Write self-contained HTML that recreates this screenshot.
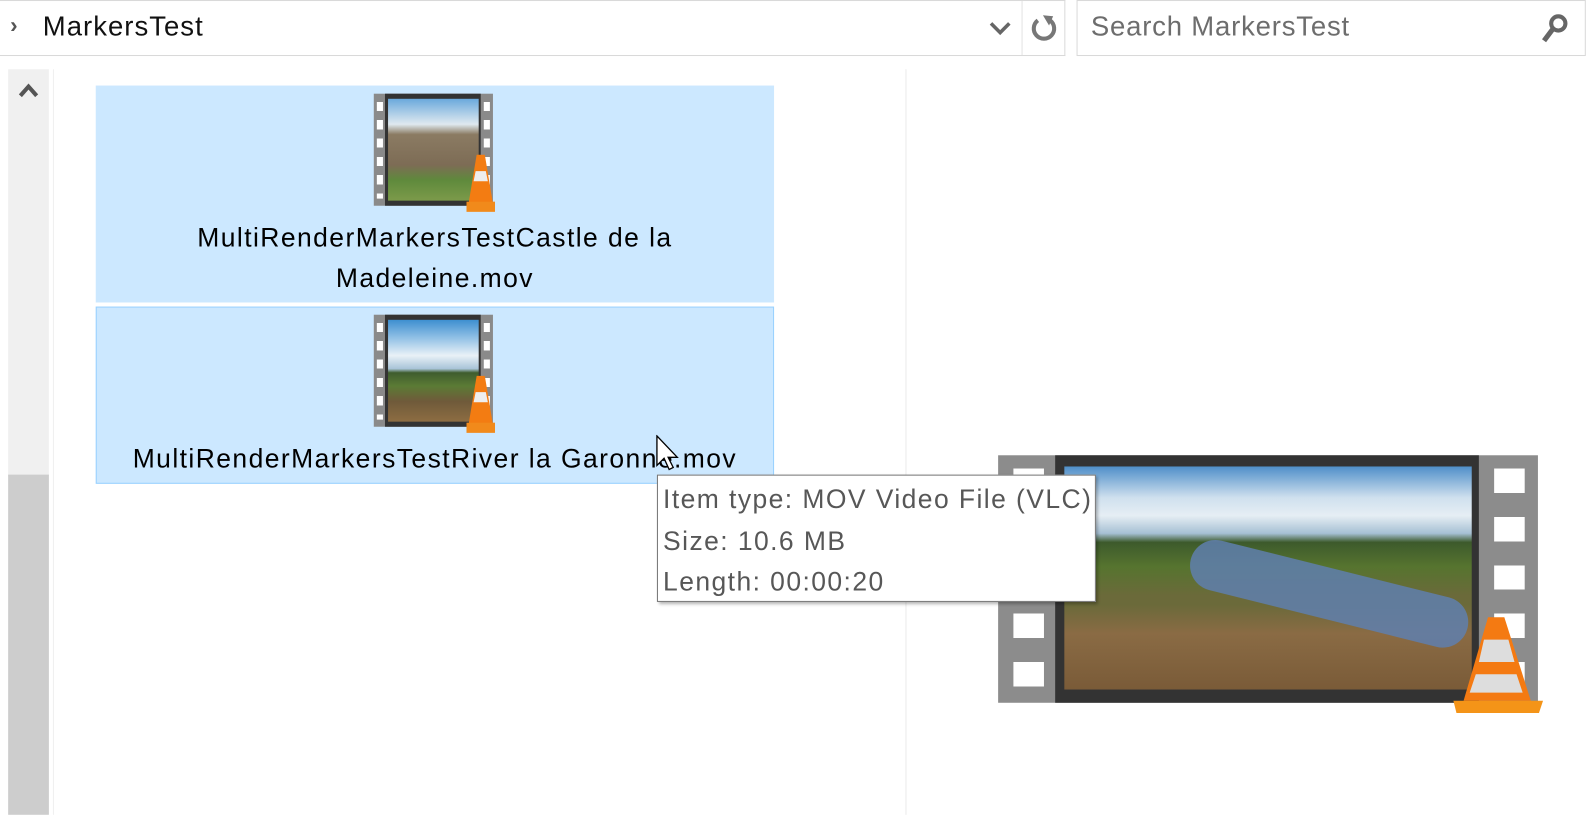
<!DOCTYPE html>
<html><head><meta charset="utf-8"><style>
body{margin:0;width:1594px;height:800px;background:#fff;position:relative;overflow:hidden;font-family:"Segoe UI","Liberation Sans",sans-serif}
#w{position:absolute;left:0;top:0;width:1566px;height:786px;transform:scale(1.0185);transform-origin:0 0}
.a{position:absolute}
.txt{font-size:26px;color:#000;text-align:center;letter-spacing:1.4px}
</style></head><body><div id="w">
<!-- top bar -->
<div class="a" style="left:0;top:0;width:1045px;height:53px;border-top:1px solid #d9d9d9;border-bottom:1px solid #d9d9d9;border-right:1px solid #d9d9d9"></div>
<div class="a" style="left:1003px;top:1px;width:1px;height:53px;background:#e3e3e3"></div>
<div class="a" style="left:10px;top:12px;font-size:22px;color:#555;font-weight:bold">›</div>
<div class="a" style="left:42px;top:11px;font-size:27px;color:#111;letter-spacing:1px">MarkersTest</div>
<svg class="a" style="left:970px;top:20px" width="24" height="16"><path d="M3 3 L12 12 L21 3" stroke="#666" stroke-width="3.5" fill="none"/></svg>
<svg class="a" style="left:1010px;top:12px" width="30" height="32"><path d="M9 8 A10 10 0 1 0 21 8" stroke="#777" stroke-width="4" fill="none"/><path d="M14 3 L24 4 L20 13 Z" fill="#777"/></svg>
<div class="a" style="left:1057px;top:0;width:498px;height:53px;border:1px solid #d9d9d9"></div>
<div class="a" style="left:1071px;top:11px;font-size:27px;color:#6d6d6d;letter-spacing:0.8px">Search MarkersTest</div>
<svg class="a" style="left:1510px;top:12px" width="34" height="34"><circle cx="20" cy="11" r="7" stroke="#666" stroke-width="4" fill="none"/><path d="M15 16 L6 28" stroke="#666" stroke-width="5"/></svg>
<!-- scrollbar -->
<div class="a" style="left:8px;top:68px;width:40px;height:400px;background:#f0f0f0"></div>
<div class="a" style="left:8px;top:466px;width:40px;height:334px;background:#cdcdcd"></div>
<svg class="a" style="left:17px;top:80px" width="22" height="18"><path d="M3 14 L11 5 L19 14" stroke="#555" stroke-width="4" fill="none"/></svg>
<div class="a" style="left:52px;top:68px;width:1px;height:732px;background:#f0f0f0"></div>
<div class="a" style="left:889px;top:68px;width:1px;height:732px;background:#eaeaea"></div>
<!-- items -->
<div class="a" style="left:94px;top:84px;width:666px;height:213px;background:#cce8ff"></div>
<div class="a" style="left:94px;top:301px;width:664px;height:172px;background:#cce8ff;border:1px solid #99d1ff"></div>
<!-- thumb1 -->
<div class="a" style="left:367px;top:92px;width:117px;height:110px;background:#8a8a8a"></div>
<div class="a" style="left:378px;top:92px;width:94px;height:110px;background:#333"></div>
<div class="a" style="left:381px;top:97px;width:89px;height:100px;background:linear-gradient(#6aa9dc 0%,#dfe9ef 25%,#8b7b63 35%,#7d6c55 65%,#5f8a3c 80%,#7c9a4a 100%)"></div>
<div class="a" style="left:370px;top:100px;width:6px;height:95px;background:repeating-linear-gradient(#fff 0 9px,#8a8a8a 9px 18px)"></div>
<div class="a" style="left:475px;top:100px;width:6px;height:95px;background:repeating-linear-gradient(#fff 0 9px,#8a8a8a 9px 18px)"></div>
<svg class="a" style="left:458px;top:150px" width="30" height="60"><path d="M10 2 L18 2 L26 50 L2 50 Z" fill="#f37c12"/><path d="M9 18 L19 18 L21 28 L7 28Z" fill="#eee"/><rect x="0" y="48" width="28" height="10" fill="#f18a1b"/></svg>
<div class="a txt" style="left:94px;top:213px;width:666px;line-height:40px">MultiRenderMarkersTestCastle de la<br>Madeleine.mov</div>
<!-- thumb2 -->
<div class="a" style="left:367px;top:309px;width:117px;height:110px;background:#8a8a8a"></div>
<div class="a" style="left:378px;top:309px;width:94px;height:110px;background:#333"></div>
<div class="a" style="left:381px;top:314px;width:89px;height:100px;background:linear-gradient(#3d8fd0 0%,#9cc7e8 20%,#e9f1f7 35%,#a9c4d8 48%,#3f5d2e 52%,#5b7b35 65%,#6f5a3a 80%,#8d6d42 100%)"></div>
<div class="a" style="left:370px;top:317px;width:6px;height:95px;background:repeating-linear-gradient(#fff 0 9px,#8a8a8a 9px 18px)"></div>
<div class="a" style="left:475px;top:317px;width:6px;height:95px;background:repeating-linear-gradient(#fff 0 9px,#8a8a8a 9px 18px)"></div>
<svg class="a" style="left:458px;top:367px" width="30" height="60"><path d="M10 2 L18 2 L26 50 L2 50 Z" fill="#f37c12"/><path d="M9 18 L19 18 L21 28 L7 28Z" fill="#eee"/><rect x="0" y="48" width="28" height="10" fill="#f18a1b"/></svg>
<div class="a txt" style="left:94px;top:430px;width:666px;line-height:40px">MultiRenderMarkersTestRiver la Garonne.mov</div>
<!-- big preview -->
<div class="a" style="left:980px;top:447px;width:530px;height:243px;background:#8c8c8c"></div>
<div class="a" style="left:1036px;top:447px;width:416px;height:243px;background:#333"></div>
<div class="a" style="left:1045px;top:458px;width:400px;height:219px;overflow:hidden;background:linear-gradient(#4f8fc9 0%,#cfe0ee 14%,#e6eef4 22%,#a6c0d4 30%,#3d5a2c 34%,#56742f 45%,#6b6a3a 58%,#6b6a3a 62%,#8a6b44 75%,#7a5b38 100%)">
<div class="a" style="left:120px;top:100px;width:280px;height:50px;background:#5f7fae;transform:rotate(14deg);border-radius:25px;opacity:.85"></div>
</div>
<div class="a" style="left:995px;top:460px;width:30px;height:220px;background:repeating-linear-gradient(#fff 0 24px,#8c8c8c 24px 47.5px)"></div>
<div class="a" style="left:1467px;top:460px;width:30px;height:220px;background:repeating-linear-gradient(#fff 0 24px,#8c8c8c 24px 47.5px)"></div>
<svg class="a" style="left:1425px;top:600px" width="92" height="104"><path d="M36 6 L52 6 L78 88 L12 88 Z" fill="#f47a12"/><path d="M32 28 L56 28 L62 50 L27 50Z" fill="#ddd"/><path d="M24 62 L64 62 L70 80 L18 80Z" fill="#ddd"/><path d="M2 88 L90 88 L86 100 L5 100Z" fill="#f49418"/></svg>
<!-- tooltip -->
<div class="a" style="left:645px;top:466px;width:429px;height:123px;background:#fff;border:1px solid #767676;box-shadow:2px 2px 3px rgba(0,0,0,.3)"></div>
<div class="a" style="left:651px;top:470px;font-size:26px;color:#575757;line-height:40.5px;letter-spacing:1.4px">Item type: MOV Video File (VLC)<br>Size: 10.6 MB<br>Length: 00:00:20</div>
<!-- cursor -->
<svg class="a" style="left:644px;top:427px" width="24" height="38"><path d="M1 1 L1 30 L8 23 L13 34 L17 32 L12 22 L21 22 Z" fill="#fff" stroke="#000" stroke-width="1.3"/></svg>
</div></body></html>
